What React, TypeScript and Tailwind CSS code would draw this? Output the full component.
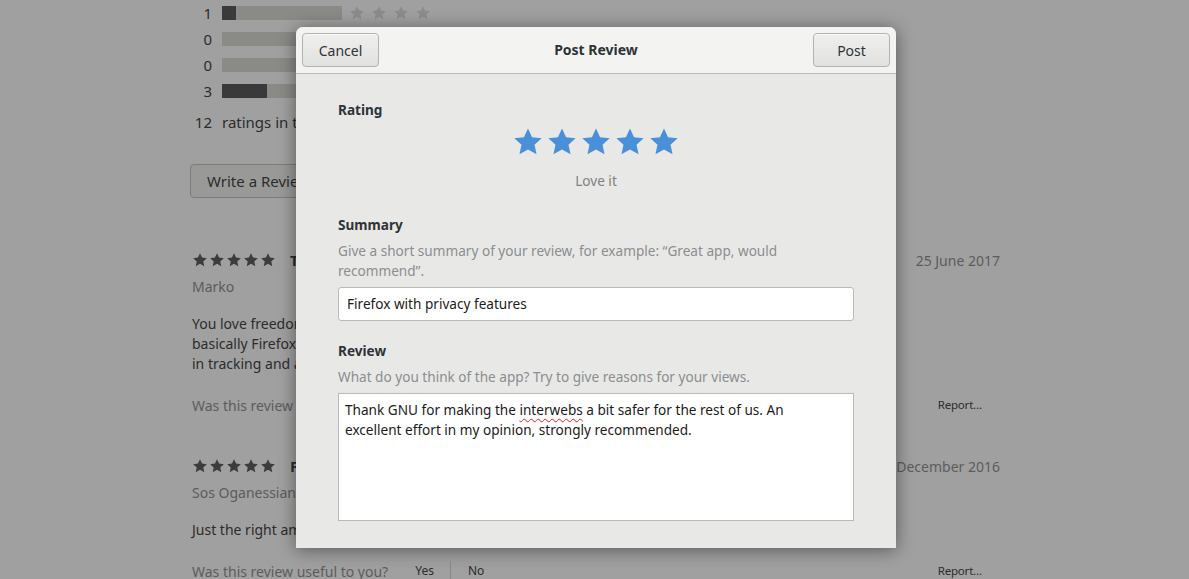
import React from "react";

const Star = ({ className, size }: { className: string; size: number }) => (
  <svg width={size} height={size} viewBox="0 0 24 24" className={className}>
    <path
      d="M12 1.8l3.05 6.6 7.2.8-5.35 4.9 1.5 7.1L12 17.6l-6.4 3.6 1.5-7.1L1.75 9.2l7.2-.8z"
      fill="currentColor"
      strokeLinejoin="round"
    />
  </svg>
);

const Bar = ({ n, fill }: { n: string; fill: number }) => (
  <div className="flex items-center h-[26px]">
    <span className="w-[20px] text-right text-[15px] text-[#2c2c2c]">{n}</span>
    <div className="ml-[10px] w-[120px] h-[14px] bg-[#8a8b87]">
      <div className="h-full bg-[#3a3a3a]" style={{ width: fill }} />
    </div>
    <div className="flex ml-[7px] gap-[6px] text-[#8c8c8c]">
      <Star className="" size={16} />
      <Star className="" size={16} />
      <Star className="" size={16} />
      <Star className="" size={16} />
    </div>
  </div>
);

const SmallStars = () => (
  <div className="flex gap-[1px] text-[#3c3c3c]">
    {[0, 1, 2, 3, 4].map((i) => (
      <Star key={i} className="" size={16} />
    ))}
  </div>
);

const Review = ({
  title,
  author,
  date,
  lines,
}: {
  title: string;
  author: string;
  date: string;
  lines: string[];
}) => (
  <div className="flex flex-col">
    <div className="flex items-center justify-between h-[22px]">
      <div className="flex items-center gap-[14px]">
        <SmallStars />
        <span className="text-[15px] font-bold text-[#2c2c2c]">{title}</span>
      </div>
      <span className="text-[14px] text-[#5c5c5c]">{date}</span>
    </div>
    <div className="mt-[6px] text-[14px] text-[#5c5c5c] leading-[20px]">{author}</div>
    <div className="mt-[17px] text-[14px] text-[#2c2c2c] leading-[20px]">
      {lines.map((l, i) => (
        <div key={i}>{l}</div>
      ))}
    </div>
    <div className="mt-[21px] flex items-center justify-between h-[20px]">
      <div className="flex items-center text-[14px]">
        <span className="text-[#5c5c5c]">Was this review useful to you?</span>
        <span className="ml-[27px] text-[12px] text-[#2c2c2c]">Yes</span>
        <span className="ml-[16px] w-px h-[20px] bg-[#888]" />
        <span className="ml-[17px] text-[12px] text-[#2c2c2c]">No</span>
      </div>
      <span className="mr-[18px] text-[11.5px] text-[#2c2c2c] tracking-[-0.2px]">Report…</span>
    </div>
  </div>
);

const GtkButton = ({ label }: { label: string }) => (
  <button className="w-[77px] h-[34px] rounded-[4px] border border-[#b3b3b0] bg-gradient-to-b from-[#efefee] to-[#e1e1df] text-[14px] text-[#2e3436] shadow-[inset_0_1px_0_rgba(255,255,255,0.6)]">
    {label}
  </button>
);

export default function App() {
  return (
    <div className="relative w-[1189px] h-[579px] overflow-hidden bg-[#a0a0a0] font-['Noto_Sans',sans-serif]">
      <div className="pl-[192px] pr-[189px] flex flex-col">
        <Bar n="1" fill={14} />
        <Bar n="0" fill={0} />
        <Bar n="0" fill={0} />
        <Bar n="3" fill={45} />
        <div className="flex items-center h-[36px] text-[15px] text-[#2c2c2c]">
          <span className="w-[20px] text-right">12</span>
          <span className="ml-[10px]">ratings in total</span>
        </div>
        <div className="mt-[24px]">
          <button className="h-[34px] px-[16px] -ml-[2px] rounded-[4px] border border-[#7c7c7c] bg-[#999a98] text-[15px] text-[#2c2c2c]">
            Write a Review
          </button>
        </div>
        <div className="mt-[51px]">
          <Review
            title="Top notch browser"
            author="Marko"
            date="25 June 2017"
            lines={[
              "You love freedom and privacy? Then this is the browser for you. It is",
              "basically Firefox with all the non-free parts removed and without built-",
              "in tracking and advertising.",
            ]}
          />
        </div>
        <div className="mt-[40px]">
          <Review
            title="Fantastic"
            author="Sos Oganessian"
            date="16 December 2016"
            lines={["Just the right amount of features and privacy."]}
          />
        </div>
      </div>

      <div className="absolute left-[296px] top-[27px] w-[600px] h-[521px] rounded-t-[7px] bg-[#e8e8e7] shadow-[0_2px_18px_rgba(0,0,0,0.45)] flex flex-col">
        <div className="h-[47px] shrink-0 rounded-t-[7px] bg-[#f3f3f2] border-b border-[#bdbdba] flex items-center justify-between px-[6px]">
          <GtkButton label="Cancel" />
          <span className="text-[14px] font-bold text-[#2e3436] -mt-[2px]">Post Review</span>
          <GtkButton label="Post" />
        </div>
        <div className="px-[42px] pt-[26px] flex flex-col text-[#2e3436] text-[13.6px]">
          <div className="font-bold leading-[20px]">Rating</div>
          <div className="mt-[6px] flex justify-center text-[#4a90d9]">
            <div className="flex gap-[2px]">
              {[0, 1, 2, 3, 4].map((i) => (
                <Star key={i} className="" size={32} />
              ))}
            </div>
          </div>
          <div className="mt-[13px] text-center text-[#7e8180] leading-[20px]">Love it</div>
          <div className="mt-[24px] font-bold leading-[20px]">Summary</div>
          <div className="mt-[6px] text-[#8b8e8f] leading-[20px]">
            Give a short summary of your review, for example: “Great app, would
            <br />
            recommend”.
          </div>
          <div className="mt-[6px] h-[34px] w-[516px] bg-white border border-[#b9b9b6] rounded-[3px] flex items-center px-[8px] text-[#1c1c1c]">
            Firefox with privacy features
          </div>
          <div className="mt-[20px] font-bold leading-[20px]">Review</div>
          <div className="mt-[6px] text-[#8b8e8f] leading-[20px]">
            What do you think of the app? Try to give reasons for your views.
          </div>
          <div className="mt-[6px] h-[128px] w-[516px] bg-white border border-[#b9b9b6] px-[6px] pt-[6px] leading-[20px] text-[#1c1c1c]">
            Thank GNU for making the{" "}
            <span className="underline decoration-wavy decoration-[#e01b24] decoration-1 underline-offset-[3px]">
              interwebs
            </span>{" "}
            a bit safer for the rest of us. An
            <br />
            excellent effort in my opinion, strongly recommended.
          </div>
        </div>
      </div>
    </div>
  );
}
